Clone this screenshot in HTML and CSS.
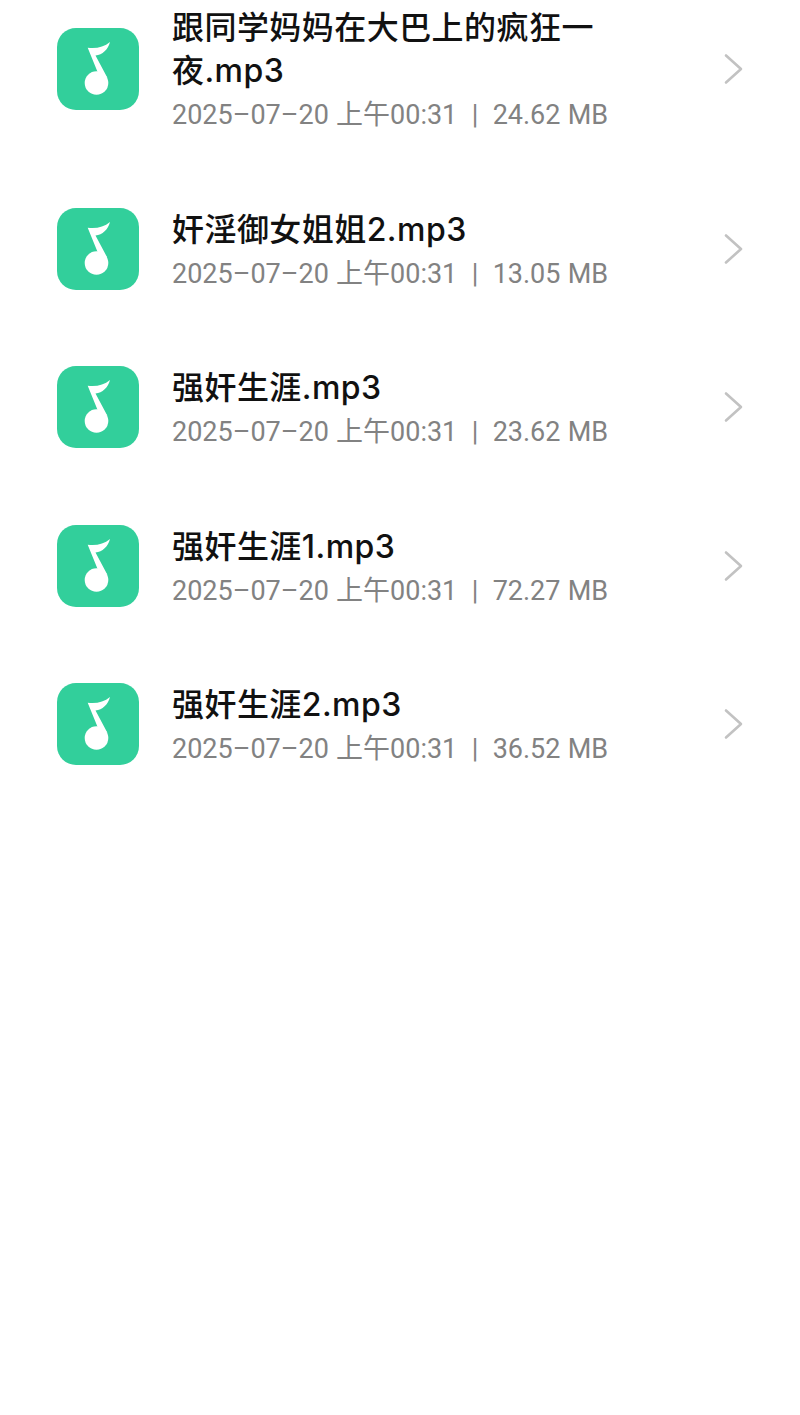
FILE: index.html
```html
<!DOCTYPE html>
<html lang="zh-CN">
<head>
  <meta charset="UTF-8" />
  <title>录音文件</title>
  <link rel="stylesheet" href="styles.css">
</head>
<body>
  <svg class="defs" width="0" height="0">
    <symbol id="music-file" viewBox="0 0 82 82">
      <rect width="82" height="82" rx="19" fill="#32cf9b"/>
      <path fill="#fff" d="M30.700 19.700C39 21 47 19 53 14C51 21.500 45.500 26.800 38.500 27.500L50.500 50L41 45Z"/>
      <circle cx="39.500" cy="55" r="11.800" fill="#fff"/>
    </symbol>
    <symbol id="chevron" viewBox="0 0 24 36">
      <path d="M3 4.500L18 18L3 31.500" fill="none" stroke="#c2c2c2" stroke-width="2.600" stroke-linecap="round" stroke-linejoin="round"/>
    </symbol>
  </svg>

  <ul class="file-list">
    <li class="file-row">
      <svg class="file-icon"><use href="#music-file"/></svg>
      <div class="file-info">
        <div class="file-name">跟同学妈妈在大巴上的疯狂一夜.mp3</div>
        <div class="file-meta">2025–07–20 上午00:31 &nbsp;|&nbsp; 24.62 MB</div>
      </div>
      <svg class="file-arrow"><use href="#chevron"/></svg>
    </li>
    <li class="file-row">
      <svg class="file-icon"><use href="#music-file"/></svg>
      <div class="file-info">
        <div class="file-name">奸淫御女姐姐2.mp3</div>
        <div class="file-meta">2025–07–20 上午00:31 &nbsp;|&nbsp; 13.05 MB</div>
      </div>
      <svg class="file-arrow"><use href="#chevron"/></svg>
    </li>
    <li class="file-row">
      <svg class="file-icon"><use href="#music-file"/></svg>
      <div class="file-info">
        <div class="file-name">强奸生涯.mp3</div>
        <div class="file-meta">2025–07–20 上午00:31 &nbsp;|&nbsp; 23.62 MB</div>
      </div>
      <svg class="file-arrow"><use href="#chevron"/></svg>
    </li>
    <li class="file-row">
      <svg class="file-icon"><use href="#music-file"/></svg>
      <div class="file-info">
        <div class="file-name">强奸生涯1.mp3</div>
        <div class="file-meta">2025–07–20 上午00:31 &nbsp;|&nbsp; 72.27 MB</div>
      </div>
      <svg class="file-arrow"><use href="#chevron"/></svg>
    </li>
    <li class="file-row">
      <svg class="file-icon"><use href="#music-file"/></svg>
      <div class="file-info">
        <div class="file-name">强奸生涯2.mp3</div>
        <div class="file-meta">2025–07–20 上午00:31 &nbsp;|&nbsp; 36.52 MB</div>
      </div>
      <svg class="file-arrow"><use href="#chevron"/></svg>
    </li>
  </ul>
</body>
</html>
```

FILE: styles.css
```css
html, body {
  height: 100%;
}

body {
  margin: 0;
  background: #fff;
  font-family: Roboto, "Noto Sans CJK SC", sans-serif;
  overflow: hidden;
}

.defs {
  display: block;
  height: 0;
}

/* list is scrolled a little, first row is cut by the top edge */
.file-list {
  list-style: none;
  margin: -32px 0 0;
  padding: 0 53px 0 57px;
}

.file-row {
  display: flex;
  align-items: center;
  padding: 32.25px 0;
}

.file-icon {
  width: 82px;
  height: 82px;
  flex: none;
}

.file-info {
  flex: 1;
  margin-left: 33px;
  padding-top: 6px;
  padding-right: 100px;
}

.file-name {
  font-family: Inter, "Noto Sans CJK SC", sans-serif;
  font-size: 32px;
  font-weight: 500;
  line-height: 43px;
  color: #111;
  letter-spacing: 0.45px;
}

.file-meta {
  margin-top: 2px;
  font-size: 27px;
  line-height: 43px;
  color: #828282;
  white-space: nowrap;
  word-spacing: 0.5px;
}

.file-arrow {
  width: 24px;
  height: 36px;
  flex: none;
}
```
